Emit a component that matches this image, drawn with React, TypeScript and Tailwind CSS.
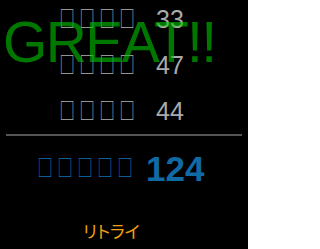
const rows = [
  { label: "□□□□", score: 33 },
  { label: "□□□□", score: 47 },
  { label: "□□□□", score: 44 },
];

function Boxes({ text, color }: { text: string; color: string }) {
  return (
    <span className={`font-['Noto_Sans_CJK_JP',sans-serif] text-[23px] leading-none ${color}`}>
      {text.split("").map((c, i) => (
        <span key={i} className="inline-block w-[20px] translate-y-[1px] scale-x-[0.66] text-center">
          {c}
        </span>
      ))}
    </span>
  );
}

export default function App() {
  return (
    <div className="relative h-[249px] w-[248px] overflow-hidden bg-black font-['Liberation_Sans',sans-serif]">
      <div className="mt-[-4px] flex flex-col">
        {rows.map((row) => (
          <div key={row.score} className="flex h-[46px] items-center pl-[56px]">
            <span className="w-[100px]">
              <Boxes text={row.label} color="text-[#b0b0b0]" />
            </span>
            <span className="text-[25px] leading-none text-[#aaaaaa]">{row.score}</span>
          </div>
        ))}
      </div>

      <div className="mx-[6px] h-[2px] bg-[#555555]" />

      <div className="flex h-[62px] items-center pl-[34px] pt-[2px]">
        <span className="w-[112px]">
          <Boxes text="□□□□□" color="text-[#1070b0]" />
        </span>
        <span className="text-[35px] font-bold leading-none text-[#106aa6]">124</span>
      </div>

      <div className="flex pl-[83px] pt-[24px]">
        <button className="font-['Noto_Sans_CJK_JP',sans-serif] text-[17px] leading-none text-[#f5a010] [font-feature-settings:'palt']">
          リトライ
        </button>
      </div>

      <div className="pointer-events-none absolute left-[3px] top-[14px] text-[57px] leading-none tracking-[-1.6px] text-[#00c800]/60">
        GREAT!!
      </div>
    </div>
  );
}
